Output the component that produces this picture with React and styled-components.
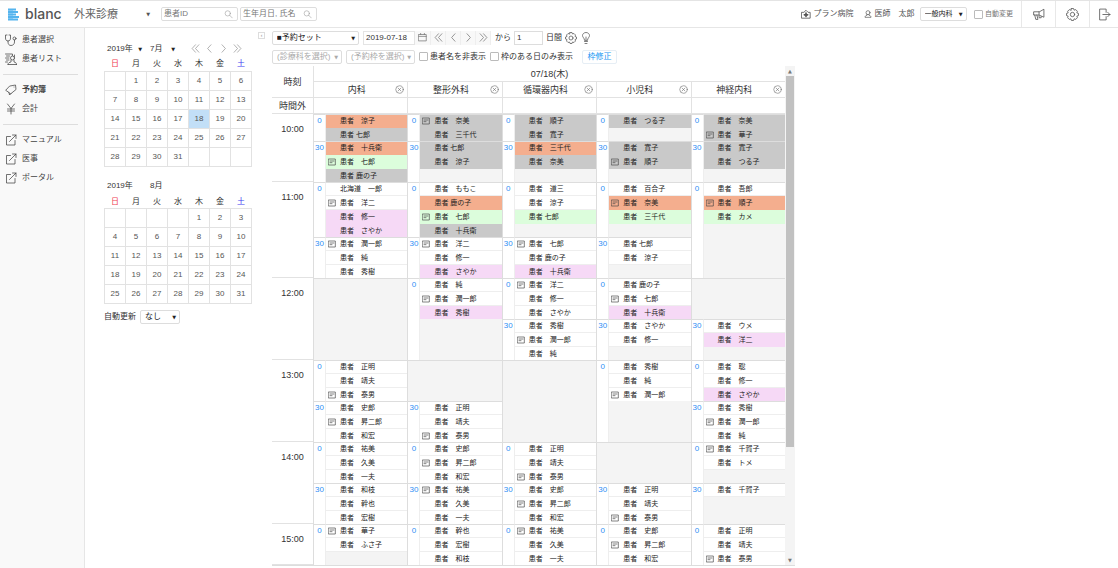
import React, { useState } from 'react';
import styled, { createGlobalStyle } from 'styled-components';

const GlobalStyle = createGlobalStyle`
  * {
    box-sizing: border-box;
  }

  body {
    margin: 0;
    background: #fff;
    color: #333;
    font-family: "Liberation Sans", "Noto Sans CJK JP", sans-serif;
    font-size: 8px;
    line-height: 12px;
  }

  button, input, select {
    font-family: inherit;
    font-size: inherit;
    line-height: inherit;
    color: inherit;
    margin: 0;
  }
`;

const Page = styled.div`
  display: flex;
  flex-direction: column;
  min-height: 100vh;
`;

const Header = styled.header`
  display: flex;
  align-items: center;
  height: 28px;
  border-top: 1px solid #e4e4e4;
  border-bottom: 1px solid #e6e6e6;
`;

const Brand = styled.a`
  display: flex;
  align-items: center;
  gap: 6px;
  width: 74px;
  padding-left: 8px;
  color: #555;
  font-family: Inter, sans-serif;
  font-size: 14px;
  font-weight: 500;
  line-height: 24px;
  text-decoration: none;
`;

const PageMenu = styled.button`
  display: flex;
  align-items: center;
  justify-content: space-between;
  width: 76px;
  margin-right: 11px;
  padding: 0;
  border: 0;
  background: none;
  color: #666;
  font-size: 11px;
  line-height: 24px;
`;

const Caret = styled.span`
  font-family: "DejaVu Sans", sans-serif;
  font-size: 5px;
  line-height: 12px;
  color: ${props => props.$color || '#222'};
`;

const SearchBox = styled.label`
  display: flex;
  align-items: center;
  width: 77px;
  height: 14px;
  margin-right: 2px;
  padding: 0 4px 0 2px;
  border: 1px solid #ddd;
  border-radius: 2px;
  color: #999;

  input {
    flex: 1;
    min-width: 0;
    padding: 0;
    border: 0;
    outline: 0;
    background: none;
    color: #333;
  }

  input::placeholder {
    color: #777;
    opacity: 1;
  }
`;

const HeaderRight = styled.div`
  display: flex;
  align-items: center;
  align-self: stretch;
  margin-left: auto;
`;

const UserInfo = styled.span`
  display: flex;
  align-items: center;
  gap: 3px;
  margin-right: ${props => props.$gap || 10}px;
  color: #555;
  white-space: pre;
`;

const HeaderButton = styled.button`
  display: flex;
  align-items: center;
  justify-content: center;
  align-self: stretch;
  width: ${props => props.$width || 34}px;
  padding: 0;
  border: 0;
  border-left: 1px solid #e8e8e8;
  background: none;
  color: #555;
`;

const SelectWrap = styled.span`
  position: relative;
  display: inline-flex;
  width: ${props => props.$width}px;
  color: ${props => (props.$muted ? '#aaa' : '#222')};
  font-size: ${props => (props.$small ? 7 : 8)}px;

  select {
    appearance: none;
    width: 100%;
    height: 14px;
    padding: 0 4px;
    border: 1px solid #ddd;
    border-radius: 2px;
    background: #fff;
    outline: 0;
  }

  ${Caret} {
    position: absolute;
    top: 1px;
    right: 4px;
    pointer-events: none;
  }
`;

const CheckLabel = styled.label`
  display: flex;
  align-items: center;
  gap: 2px;
  color: ${props => (props.$muted ? '#777' : '#333')};
  font-size: ${props => (props.$muted ? 7 : 8)}px;

  input {
    appearance: none;
    width: 9px;
    height: 9px;
    border: 1px solid #bbb;
    border-radius: 1px;
    background: #fff;
  }

  input:checked {
    background: #4aa3f0;
  }
`;

const Body = styled.div`
  display: flex;
  flex: 1;
`;

const Sidebar = styled.nav`
  flex: none;
  width: 85px;
  padding: 2px 6px 0 3px;
  border-right: 1px solid #e6e6e6;
  background: #f9f9f9;
`;

const NavGroup = styled.div`
  padding-bottom: 6px;

  & + & {
    padding-top: 5px;
    border-top: 1px solid #ddd;
  }
`;

const NavLink = styled.a`
  display: flex;
  align-items: center;
  gap: 5px;
  height: 19px;
  padding-left: 2px;
  color: #444;
  font-weight: ${props => (props.$active ? 700 : 400)};
  text-decoration: none;
`;

const CalendarPane = styled.section`
  position: relative;
  flex: none;
  width: 187px;
  padding: 13px 19px 0;
`;

const Collapse = styled.button`
  position: absolute;
  top: 4px;
  right: 7px;
  width: 7px;
  height: 7px;
  padding: 0;
  border: 1px solid #ddd;
  background: #fff;
  color: #888;
  font-size: 5px;
  line-height: 5px;
`;

const MonthBar = styled.div`
  display: flex;
  align-items: center;
  height: 15px;
  padding-left: 3px;
`;

const MonthPart = styled.span`
  display: flex;
  justify-content: space-between;
  align-items: center;
  width: ${props => props.$width}px;
  margin-right: 8px;
`;

const ArrowGroup = styled.span`
  display: flex;
  gap: 4px;
  margin-left: 7px;
`;

const ArrowButton = styled.button`
  display: flex;
  align-items: center;
  justify-content: center;
  width: ${props => props.$width || 10}px;
  height: 14px;
  padding: 0;
  border: 0;
  border-right: ${props => (props.$boxed ? '1px solid #eee' : '0')};
  background: ${props => (props.$boxed ? '#f8f8f8' : 'none')};
  color: #777;
`;

const MonthTable = styled.table`
  width: 148px;
  margin-bottom: 12px;
  border-collapse: collapse;
  table-layout: fixed;
  text-align: center;

  th {
    height: 15px;
    padding: 2px 0 0;
    font-weight: 400;
  }

  td {
    height: 19px;
    padding: 0;
    border: 1px solid #e2e2e2;
    color: #555;
  }

  td[aria-current] {
    background: #c2dff7;
  }
`;

const DayName = styled.th`
  color: ${props => props.$color};
`;

const RefreshRow = styled.div`
  display: flex;
  align-items: center;
  gap: 4px;
  margin-top: -6px;
`;

const Main = styled.main`
  flex: 1;
  min-width: 0;
`;

const Toolbar = styled.div`
  display: flex;
  align-items: center;
  gap: ${props => props.$gap}px;
  height: 19px;
`;

const DateGroup = styled.div`
  display: flex;
  align-items: center;
  margin: 0 1px;

  input {
    width: 52px;
    height: 14px;
    padding: 0 2px;
    border: 1px solid #e4e4e4;
    outline: 0;
  }
`;

const DaysInput = styled.input`
  width: 29px;
  height: 14px;
  padding: 0 2px;
  border: 1px solid #ddd;
  outline: 0;
`;

const IconButton = styled.button`
  display: flex;
  padding: 0;
  border: 0;
  background: none;
  color: #555;
`;

const EditButton = styled.button`
  width: 35px;
  height: 14px;
  margin-left: 5px;
  padding: 0;
  border: 1px solid #e6eef5;
  border-radius: 2px;
  background: #fff;
  color: #2196f3;
`;

const Schedule = styled.div`
  display: flex;
  max-width: 523px;
  border-bottom: 1px solid #ddd;
`;

const ScheduleTable = styled.table`
  flex: 1;
  border-collapse: separate;
  border-spacing: 0;
  table-layout: fixed;

  th, td {
    padding: 0;
    font-weight: 400;
  }
`;

const HeadCell = styled.th`
  height: 16px;
  border-left: ${props => (props.$first ? '0' : '1px solid #e2e2e2')};
  border-bottom: 1px solid #e2e2e2;
  font-size: 9px;
  line-height: 14px;
`;

const DeptName = styled.div`
  display: flex;
  align-items: center;
  padding: 0 3px 0 4px;

  span {
    flex: 1;
  }
`;

const CloseButton = styled.button`
  display: flex;
  padding: 0;
  border: 0;
  background: none;
  color: #666;
`;

const HourCell = styled.th`
  border-bottom: 1px solid #e2e2e2;
  font-size: 9px;
  line-height: 14px;
  vertical-align: top;

  span {
    display: block;
    padding-top: 8px;
  }
`;

const MinuteCell = styled.td`
  border-top: ${props => (props.$line ? '1px solid #ddd' : '0')};
  border-left: 1px solid #ddd;
  border-right: 1px solid #eee;
  color: #2f8ff5;
  line-height: 11px;
  text-align: center;
  vertical-align: top;
`;

const SlotCell = styled.td`
  background: #f4f4f4;
  border-left: ${props => (props.$wide ? '1px solid #ddd' : '0')};
  vertical-align: top;
`;

const Slots = styled.ul`
  height: ${props => props.$rows * 14 - 1}px;
  margin: 0;
  padding: 0;
  border-top: ${props => (props.$line ? '1px solid #ddd' : '0')};
  list-style: none;
`;

const tones = {
  orange: '#f4ae8e',
  gray: '#c9c9c9',
  green: '#dcfddc',
  pink: '#f6d9f6',
};

const Entry = styled.li`
  display: grid;
  grid-template-columns: 14px 1fr;
  align-items: center;
  height: 14px;
  border-bottom: 1px solid ${props => tones[props.$tone] || '#eee'};
  background: ${props => tones[props.$tone] || '#fff'};
  color: #222;
  font-size: 7px;
  line-height: 12px;
  white-space: pre;

  &:first-child {
    height: 13px;
  }

  &:nth-child(${props => props.$rows}) {
    height: 13px;
    border-bottom: 0;
  }
`;

const MemoMark = styled.span`
  display: flex;
  padding-left: 2px;
  color: #444;
`;

const ScrollTrack = styled.div`
  display: flex;
  flex-direction: column;
  align-items: center;
  width: 10px;
  background: #f4f4f4;
`;

const ScrollThumb = styled.div`
  width: 8px;
  flex: 371;
  background: #c1c1c1;
`;

const ScrollRest = styled.div`
  flex: 108;
`;

const ScrollArrow = styled.span`
  height: 10px;
  color: #777;
  font-family: "DejaVu Sans", sans-serif;
  font-size: 5px;
  line-height: 10px;
`;

const Icon = ({ size = 12, sw = 1.5, children }) => (
  <svg
    width={size}
    height={size}
    viewBox="0 0 24 24"
    fill="none"
    stroke="currentColor"
    strokeWidth={sw}
    strokeLinecap="round"
    strokeLinejoin="round"
    aria-hidden="true"
  >
    {children}
  </svg>
);

const icons = {
  stethoscope: (
    <>
      <path d="M4 2H1v6c0 4 2 6 5 6s5-2 5-6V2H8M6 14v2c0 4 2 7 6 7s7-3 7-7v-4" />
      <circle cx="19" cy="9" r="3" />
    </>
  ),
  list: (
    <>
      <path d="M1 2h14v3M3 6h6M1 10h7M3 14h5M1 18h4" />
      <circle cx="15" cy="10" r="4" />
      <path d="M6 23c0-4 3-4 6-5v-4M23 23c0-4-2-4-5-5v-4M6 23h17M19 4v3" />
    </>
  ),
  tag: (
    <>
      <path d="M10 4L21 2l1 9L11 20l-3-3-6-4z" />
      <path d="M8 17l1 5 3-3M18 6h.1" />
    </>
  ),
  yen: <path d="M5 2l7 9 7-9M12 11v11M5 12h14M5 16h14" />,
  external: <path d="M11 5H3v17h17v-9M9 15L22 2M15 2h7v7" />,
  search: (
    <>
      <circle cx="10" cy="9" r="7" />
      <path d="M15 14l7 7" />
    </>
  ),
  hospital: (
    <>
      <path d="M2 8h5l5-5 5 5h5v14H2z" />
      <path d="M12 10v8M8 14h8" strokeWidth="4" />
    </>
  ),
  user: (
    <>
      <circle cx="12" cy="8" r="6" />
      <path d="M9 13v3c-4 1-6 2-6 6h18c0-4-2-5-6-6v-3" />
    </>
  ),
  horn: <path d="M22 3v14l-9-4H3V7h10zM13 7v6M5 13l2 8h4l-2-8M13 15v3h4v-2" />,
  gear: (
    <>
      <path d="M10 1h4l1 3 3-1 3 3-1 3 3 1v4l-3 1 1 3-3 3-3-1-1 3h-4l-1-3-3 1-3-3 1-3-3-1v-4l3-1-1-3 3-3 3 1z" />
      <circle cx="12" cy="12" r="4" />
    </>
  ),
  logout: <path d="M15 8V2H3v20h12v-6M9 12h13M18 8l4 4-4 4" />,
  calendar: <path d="M2 4h20v17H2zM2 9h20M7 1v3M17 1v3" />,
  bulb: <path d="M9 16c0-4-4-5-4-9 0-3 3-6 7-6s7 3 7 6c0 4-4 5-4 9zM9 19h6M10 23h4M12 10v6" />,
  close: (
    <>
      <circle cx="12" cy="12" r="10" />
      <path d="M8 8l8 8M16 8l-8 8" />
    </>
  ),
  memo: <path d="M2 3h20v18H2zM6 9h12M6 14h6" />,
  first: <path d="M12 2L3 12l9 10M21 2l-9 10 9 10" />,
  prev: <path d="M16 2L7 12l9 10" />,
  next: <path d="M8 2l9 10-9 10" />,
  last: <path d="M3 2l9 10-9 10M12 2l9 10-9 10" />,
};

const arrows = [
  ['first', '最初'],
  ['prev', '前へ'],
  ['next', '次へ'],
  ['last', '最後'],
];

const navGroups = [
  [['患者選択', 'stethoscope'], ['患者リスト', 'list']],
  [['予約簿', 'tag', true], ['会計', 'yen']],
  [['マニュアル', 'external'], ['医事', 'external'], ['ポータル', 'external']],
];

const dayNames = ['日', '月', '火', '水', '木', '金', '土'];
const dayColors = { 日: '#f04050', 土: '#4040f0' };

const departments = ['内科', '整形外科', '循環器内科', '小児科', '神経内科'];

// each entry is "name|tone|memo", one list per department
const timetable = [
  {
    hour: '10:00',
    slots: [
      { minute: '0', rows: 2, entries: [
        ['患者　涼子|orange', '患者 七郎|gray'],
        ['患者　奈美|gray|memo', '患者　三千代|gray'],
        ['患者　順子|gray', '患者　寛子|gray'],
        ['患者　つる子|gray'],
        ['患者　奈美|gray', '患者　華子|gray|memo'],
      ] },
      { minute: '30', rows: 3, entries: [
        ['患者　十兵衛|orange', '患者　七郎|green|memo', '患者 鹿の子|gray'],
        ['患者 七郎|gray', '患者　涼子|gray'],
        ['患者　三千代|orange', '患者　奈美|gray'],
        ['患者　寛子|gray', '患者　順子|gray|memo'],
        ['患者　寛子|gray', '患者　つる子|gray'],
      ] },
    ],
  },
  {
    hour: '11:00',
    slots: [
      { minute: '0', rows: 4, entries: [
        ['北海道　一郎', '患者　洋二||memo', '患者　修一|pink', '患者　さやか|pink'],
        ['患者　ももこ', '患者 鹿の子|orange', '患者　七郎|green|memo', '患者　十兵衛|gray'],
        ['患者　道三', '患者　涼子', '患者 七郎|green'],
        ['患者　百合子', '患者　奈美|orange|memo', '患者　三千代|green'],
        ['患者　吾郎', '患者　順子|orange|memo', '患者　カメ|green'],
      ] },
      { minute: '30', rows: 3, entries: [
        ['患者　潤一郎||memo', '患者　純', '患者　秀樹'],
        ['患者　洋二||memo', '患者　修一', '患者　さやか|pink'],
        ['患者　七郎||memo', '患者 鹿の子', '患者　十兵衛|pink'],
        ['患者 七郎', '患者　涼子'],
        [],
      ] },
    ],
  },
  {
    hour: '12:00',
    slots: [
      { minute: '0', rows: 3, entries: [
        [],
        ['患者　純', '患者　潤一郎||memo', '患者　秀樹|pink'],
        ['患者　洋二||memo', '患者　修一', '患者　さやか'],
        ['患者 鹿の子', '患者　七郎||memo', '患者　十兵衛|pink'],
        [],
      ] },
      { minute: '30', rows: 3, entries: [
        [],
        [],
        ['患者　秀樹', '患者　潤一郎||memo', '患者　純'],
        ['患者　さやか', '患者　修一'],
        ['患者　ウメ', '患者　洋二|pink'],
      ] },
    ],
  },
  {
    hour: '13:00',
    slots: [
      { minute: '0', rows: 3, entries: [
        ['患者　正明', '患者　靖夫', '患者　泰男||memo'],
        [],
        [],
        ['患者　秀樹', '患者　純', '患者　潤一郎||memo'],
        ['患者　聡', '患者　修一', '患者　さやか|pink'],
      ] },
      { minute: '30', rows: 3, entries: [
        ['患者　史郎', '患者　昇二郎||memo', '患者　和宏'],
        ['患者　正明', '患者　靖夫', '患者　泰男||memo'],
        [],
        [],
        ['患者　秀樹', '患者　潤一郎||memo', '患者　純'],
      ] },
    ],
  },
  {
    hour: '14:00',
    slots: [
      { minute: '0', rows: 3, entries: [
        ['患者　祐美', '患者　久美', '患者　一夫'],
        ['患者　史郎', '患者　昇二郎||memo', '患者　和宏'],
        ['患者　正明', '患者　靖夫', '患者　泰男||memo'],
        [],
        ['患者　千賀子||memo', '患者　トメ'],
      ] },
      { minute: '30', rows: 3, entries: [
        ['患者　和枝', '患者　幹也', '患者　宏樹'],
        ['患者　祐美||memo', '患者　久美', '患者　一夫'],
        ['患者　史郎', '患者　昇二郎||memo', '患者　和宏'],
        ['患者　正明', '患者　靖夫', '患者　泰男||memo'],
        ['患者　千賀子'],
      ] },
    ],
  },
  {
    hour: '15:00',
    slots: [
      { minute: '0', rows: 3, entries: [
        ['患者　華子||memo', '患者　ふさ子'],
        ['患者　幹也', '患者　宏樹', '患者　和枝'],
        ['患者　祐美||memo', '患者　久美', '患者　一夫'],
        ['患者　史郎', '患者　昇二郎||memo', '患者　和宏'],
        ['患者　正明', '患者　靖夫', '患者　泰男||memo'],
      ] },
    ],
  },
];

const Select = ({ label, options, caretColor, ...rest }) => (
  <SelectWrap {...rest}>
    <select aria-label={label}>
      {options.map(option => <option key={option}>{option}</option>)}
    </select>
    <Caret $color={caretColor}>▼</Caret>
  </SelectWrap>
);

const Month = ({ offset, today }) => {
  const weeks = [0, 1, 2, 3, 4].map(week =>
    dayNames.map((_, i) => {
      const day = week * 7 + i + 1 - offset;
      return day > 0 && day <= 31 ? day : '';
    })
  );

  return (
    <MonthTable>
      <thead>
        <tr>
          {dayNames.map(name => <DayName key={name} $color={dayColors[name]}>{name}</DayName>)}
        </tr>
      </thead>
      <tbody>
        {weeks.map((week, i) => (
          <tr key={i}>
            {week.map((day, j) => (
              <td key={j} aria-current={day && day === today ? 'date' : undefined}>{day}</td>
            ))}
          </tr>
        ))}
      </tbody>
    </MonthTable>
  );
};

const SlotGroup = ({ slot, entries, wide, line }) => (
  <SlotCell colSpan={wide ? 2 : 1} $wide={wide}>
    <Slots $rows={slot.rows} $line={line}>
      {entries.map((entry, i) => {
        const [name, tone, memo] = entry.split('|');
        return (
          <Entry key={i} $tone={tone} $rows={slot.rows}>
            <MemoMark>{memo && <Icon size={8} sw={2}>{icons.memo}</Icon>}</MemoMark>
            <span>{name}</span>
          </Entry>
        );
      })}
    </Slots>
  </SlotCell>
);

const ScheduleGrid = () => (
  <Schedule>
    <ScheduleTable>
      <colgroup>
        <col style={{ width: 41 }} />
        {departments.map(name => (
          <React.Fragment key={name}>
            <col style={{ width: 13 }} />
            <col />
          </React.Fragment>
        ))}
      </colgroup>
      <thead>
        <tr>
          <HeadCell rowSpan={2} $first>時刻</HeadCell>
          <HeadCell colSpan={10}>07/18(木)</HeadCell>
        </tr>
        <tr>
          {departments.map(name => (
            <HeadCell key={name} colSpan={2}>
              <DeptName>
                <span>{name}</span>
                <CloseButton aria-label={`${name}を閉じる`}>
                  <Icon size={9}>{icons.close}</Icon>
                </CloseButton>
              </DeptName>
            </HeadCell>
          ))}
        </tr>
        <tr>
          <HeadCell $first>時間外</HeadCell>
          {departments.map(name => <HeadCell key={name} as="td" colSpan={2} />)}
        </tr>
      </thead>
      <tbody>
        {timetable.map(({ hour, slots }) =>
          slots.map((slot, s) => (
            <tr key={hour + slot.minute}>
              {s === 0 && <HourCell rowSpan={slots.length}><span>{hour}</span></HourCell>}
              {slot.entries.map((entries, d) => {
                const filled = entries.length > 0;
                const wide = !filled && (s === 0 || slots[0].entries[d].length === 0);
                const line = filled || s === 0;
                return (
                  <React.Fragment key={departments[d]}>
                    {!wide && <MinuteCell $line={line}>{filled ? slot.minute : ''}</MinuteCell>}
                    <SlotGroup slot={slot} entries={entries} wide={wide} line={line} />
                  </React.Fragment>
                );
              })}
            </tr>
          ))
        )}
      </tbody>
    </ScheduleTable>
    <ScrollTrack aria-hidden="true">
      <ScrollArrow>▲</ScrollArrow>
      <ScrollThumb />
      <ScrollRest />
      <ScrollArrow>▼</ScrollArrow>
    </ScrollTrack>
  </Schedule>
);

const App = () => {
  const [date, setDate] = useState('2019-07-18');
  const [days, setDays] = useState('1');

  return (
    <Page>
      <GlobalStyle />
      <Header>
        <Brand href="#">
          <svg width="11" height="13" viewBox="0 0 11 13" aria-hidden="true">
            <path
              d="M0 1.5h8M0 4h10M0 6.5h8M0 9h11M0 11.5h10"
              stroke="#55b4ee"
              strokeWidth="1.8"
            />
            <path d="M0 1h5v11H0z" fill="#55b4ee" fillOpacity="0.5" />
          </svg>
          blanc
        </Brand>
        <PageMenu>外来診療 <Caret $color="#555">▼</Caret></PageMenu>
        <SearchBox>
          <input aria-label="患者ID" placeholder="患者ID" />
          <Icon size={9}>{icons.search}</Icon>
        </SearchBox>
        <SearchBox>
          <input aria-label="生年月日, 氏名" placeholder="生年月日, 氏名" />
          <Icon size={9}>{icons.search}</Icon>
        </SearchBox>
        <HeaderRight>
          <UserInfo><Icon size={10} sw={2}>{icons.hospital}</Icon>プラン病院</UserInfo>
          <UserInfo $gap={5}><Icon size={8} sw={2}>{icons.user}</Icon>医師　太郎</UserInfo>
          <Select label="診療科" options={['一般内科']} $width={47} $small />
          <UserInfo $gap={8}>
            <span>  </span>
            <CheckLabel $muted><input type="checkbox" />自動変更</CheckLabel>
          </UserInfo>
          <HeaderButton aria-label="お知らせ"><Icon size={13}>{icons.horn}</Icon></HeaderButton>
          <HeaderButton aria-label="設定"><Icon size={13}>{icons.gear}</Icon></HeaderButton>
          <HeaderButton aria-label="ログアウト" $width={29}><Icon size={13}>{icons.logout}</Icon></HeaderButton>
        </HeaderRight>
      </Header>
      <Body>
        <Sidebar>
          {navGroups.map((group, i) => (
            <NavGroup key={i}>
              {group.map(([name, icon, active]) => (
                <NavLink key={name} href="#" $active={active}>
                  <Icon>{icons[icon]}</Icon>
                  {name}
                </NavLink>
              ))}
            </NavGroup>
          ))}
        </Sidebar>
        <CalendarPane>
          <Collapse aria-label="閉じる">‹</Collapse>
          <MonthBar>
            <MonthPart $width={35}>2019年 <Caret>▼</Caret></MonthPart>
            <MonthPart $width={25}>7月 <Caret>▼</Caret></MonthPart>
            <ArrowGroup>
              {arrows.map(([icon, label]) => (
                <ArrowButton key={icon} aria-label={label}>
                  <Icon size={9}>{icons[icon]}</Icon>
                </ArrowButton>
              ))}
            </ArrowGroup>
          </MonthBar>
          <Month offset={1} today={18} />
          <MonthBar>
            <MonthPart $width={35}>2019年</MonthPart>
            <MonthPart $width={25}>8月</MonthPart>
          </MonthBar>
          <Month offset={4} />
          <RefreshRow>
            自動更新
            <Select label="自動更新" options={['なし']} $width={40} />
          </RefreshRow>
        </CalendarPane>
        <Main>
          <Toolbar $gap={3}>
            <Select label="予約セット" options={['■予約セット']} $width={87} />
            <DateGroup>
              <input aria-label="日付" value={date} onChange={e => setDate(e.target.value)} />
              <ArrowButton $boxed $width={16} aria-label="カレンダー">
                <Icon size={9} sw={2}>{icons.calendar}</Icon>
              </ArrowButton>
              {arrows.map(([icon, label]) => (
                <ArrowButton key={icon} $boxed $width={15} aria-label={label}>
                  <Icon size={9} sw={2}>{icons[icon]}</Icon>
                </ArrowButton>
              ))}
            </DateGroup>
            <span>から</span>
            <DaysInput aria-label="日数" value={days} onChange={e => setDays(e.target.value)} />
            <span>日間</span>
            <IconButton aria-label="表示設定"><Icon size={12}>{icons.gear}</Icon></IconButton>
            <IconButton aria-label="ヒント"><Icon size={12}>{icons.bulb}</Icon></IconButton>
          </Toolbar>
          <Toolbar $gap={4}>
            <Select label="診療科を選択" options={['(診療科を選択)']} $width={70} $muted caretColor="#aaa" />
            <Select label="予約枠を選択" options={['(予約枠を選択)']} $width={69} $muted caretColor="#aaa" />
            <CheckLabel><input type="checkbox" />患者名を非表示</CheckLabel>
            <CheckLabel><input type="checkbox" />枠のある日のみ表示</CheckLabel>
            <EditButton>枠修正</EditButton>
          </Toolbar>
          <ScheduleGrid />
        </Main>
      </Body>
    </Page>
  );
};

export default App;
